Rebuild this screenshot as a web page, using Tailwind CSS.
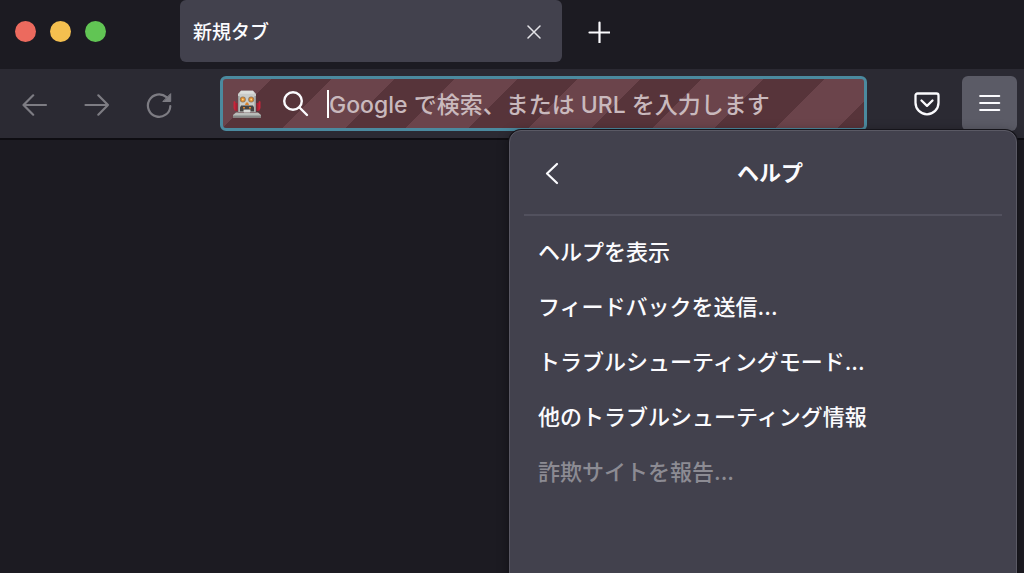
<!DOCTYPE html>
<html lang="ja">
<head>
<meta charset="utf-8">
<meta name="viewport" content="width=device-width, initial-scale=1">
<title>新規タブ</title>
<script src="https://cdn.jsdelivr.net/npm/@tailwindcss/browser@4"></script>
</head>
<body class="relative flex h-screen flex-col overflow-hidden bg-[#1c1b22] font-['Inter','Noto_Sans_CJK_JP',sans-serif] text-[#fbfbfe]">

  <!-- Tab strip -->
  <header class="flex h-[69px] shrink-0 items-start">
    <div class="flex w-[180px] shrink-0 gap-[14px] pt-[21px] pl-[15px]">
      <button aria-label="閉じる" class="size-[21px] rounded-full bg-[#ec6a5e]"></button>
      <button aria-label="最小化" class="size-[21px] rounded-full bg-[#f4bf4f]"></button>
      <button aria-label="最大化" class="size-[21px] rounded-full bg-[#61c554]"></button>
    </div>
    <div class="flex h-[62px] w-[382px] items-center justify-between rounded-md bg-[#42414d] pt-1 pr-5 pl-[13px]">
      <span class="text-[19px] leading-7 font-medium">新規タブ</span>
      <button aria-label="タブを閉じる" class="flex size-4">
        <svg viewBox="0 0 16 16" class="size-4" fill="none" stroke="#e4e4e8" stroke-width="1.500" stroke-linecap="round"><path d="M2 1 14 13M14 1 2 13"/></svg>
      </button>
    </div>
    <button aria-label="新しいタブ" class="ml-[26px] flex pt-[21px]">
      <svg viewBox="0 0 22 22" class="size-[22px]" fill="none" stroke="#fbfbfe" stroke-width="2.200" stroke-linecap="round"><path d="M11.500 1.500v20M1.500 11.500h20"/></svg>
    </button>
  </header>

  <!-- Navigation toolbar -->
  <nav class="flex h-[71px] shrink-0 items-start border-b-2 border-[#0e0d12] bg-[#2b2a33] pt-[7px] pr-[7px]">
    <div class="flex w-[220px] shrink-0 items-center gap-9 pt-4 pl-[22px]">
      <button aria-label="戻る" class="flex" disabled>
        <svg viewBox="0 0 26 26" class="size-[26px]" fill="none" stroke="#7d7c83" stroke-width="2.200" stroke-linecap="round" stroke-linejoin="round"><path d="M24 13H1.500M11.200 3.300 1.500 13l9.700 9.700"/></svg>
      </button>
      <button aria-label="進む" class="flex" disabled>
        <svg viewBox="0 0 26 26" class="size-[26px]" fill="none" stroke="#7d7c83" stroke-width="2.200" stroke-linecap="round" stroke-linejoin="round"><path d="M1.500 13H24M14.300 3.300 24 13l-9.700 9.700"/></svg>
      </button>
      <button aria-label="再読み込み" class="flex" disabled>
        <svg viewBox="0 0 26 26" class="size-[26px]" fill="none" stroke="#7d7c83" stroke-width="2.200" stroke-linecap="round"><path d="M24.300 14.200A11.200 11.200 0 1 1 20.500 5.200"/><path d="M24.700 2v7.500h-7.500z" fill="#7d7c83" stroke-width="1" stroke-linejoin="round"/></svg>
      </button>
    </div>

    <div class="relative flex h-[55px] min-w-0 flex-1 items-center rounded-md border-[3px] border-[#4b8a9f] bg-[repeating-linear-gradient(135deg,#6b444b_0px,#6b444b_34px,#57343a_34px,#57343a_77px,#6b444b_77px,#6b444b_87px)] pl-2.5">
      <svg viewBox="0 0 28 28" class="size-7 shrink-0" aria-hidden="true">
        <path d="M.500 11.500 2 11l1 3v6l-1 1-1.500-3zM27.500 11.500 26 11l-1 3v6l1 1 1.500-3z" fill="#c9253a"/>
        <path d="M2.500 13h2v8h-2zM23.500 13h2v8h-2z" fill="#a32133"/>
        <path d="M8 .800h12l3 3V22H5V3.800z" fill="#c9cbc9"/>
        <path d="M8 .800h12l1.500 3h-15z" fill="#dcdedb"/>
        <path d="M5 6h1.500v16H5zM21.500 6H23v16h-1.500z" fill="#969a99"/>
        <circle cx="9.800" cy="9.500" r="3" fill="#8d7864"/><circle cx="18.200" cy="9.500" r="3" fill="#8d7864"/>
        <circle cx="9.800" cy="9.500" r="2.200" fill="#e08a28"/><circle cx="18.200" cy="9.500" r="2.200" fill="#e08a28"/>
        <circle cx="9.800" cy="9.500" r=".9" fill="#f6d38a"/><circle cx="18.200" cy="9.500" r=".9" fill="#f6d38a"/>
        <path d="M13 12.500h2l1 2.500h-4z" fill="#d9822b"/>
        <path d="M8 15.500h12l1 2v4h-3.500v-2h-7v2H7v-4z" fill="#454242"/>
        <path d="M10 17h2v1.500h-2zM16 17h2v1.500h-2z" fill="#d9822b"/>
        <path d="M11 20h6v2.500h-6z" fill="#d8dad7"/>
        <path d="M3 22.500h22l3 2.500v2.500H0V25z" fill="#b9bcb9"/>
        <path d="M0 25.500h28v2H0z" fill="#848887"/>
      </svg>
      <svg viewBox="0 0 26 26" class="ml-[22px] size-[26px] shrink-0" fill="none" stroke="#fbfbfe" stroke-width="2.400" stroke-linecap="round" aria-hidden="true"><circle cx="10" cy="10" r="8.800"/><path d="M16.500 16.500 24 24"/></svg>
      <span class="ml-[18px] h-7 w-0.5 shrink-0 bg-white" aria-hidden="true"></span>
      <input type="text" aria-label="検索またはアドレスを入力" placeholder="Google で検索、または URL を入力します" class="h-10 min-w-0 flex-1 bg-transparent pt-0.5 text-[23px] font-medium outline-none placeholder:text-[#c9b9bd]">
    </div>

    <button aria-label="Pocket に保存" class="mt-4 ml-[47px] flex">
      <svg viewBox="0 0 26 24" class="h-6 w-[26px]" fill="none" stroke="#fbfbfe" stroke-width="2.300" stroke-linecap="round" stroke-linejoin="round"><path d="M3.500 1.500h19a2 2 0 0 1 2 2v7.300a11.500 11.500 0 0 1-23 0V3.500a2 2 0 0 1 2-2z"/><path d="m7.500 8.500 5.500 5.300 5.500-5.300"/></svg>
    </button>
    <button aria-label="メニュー" class="ml-[22px] flex h-[55px] w-[55px] justify-center rounded-md bg-[#5b5b66] pt-[17px]">
      <svg viewBox="0 0 22 20" class="h-5 w-[22px]" fill="none" stroke="#fbfbfe" stroke-width="2.200" stroke-linecap="round"><path d="M1.200 3h19M1.200 10h19M1.200 17h19"/></svg>
    </button>
  </nav>

  <main class="flex-1"></main>

  <!-- Help panel, hanging from the menu button -->
  <section aria-labelledby="panel-title" class="absolute top-[130px] right-[7px] -bottom-4 w-[508px] rounded-xl border border-[#5a5964] bg-[#42414d] px-3.5 shadow-[0_0_0_1px_#15141a,0_2px_12px_rgba(0,0,0,0.4)]">
    <header class="grid h-[85px] grid-cols-[56px_1fr_42px] items-center border-b-2 border-[#52515e]">
      <button aria-label="戻る" class="flex justify-center">
        <svg viewBox="0 0 24 24" class="size-6" fill="none" stroke="#fbfbfe" stroke-width="2.200" stroke-linecap="round" stroke-linejoin="round"><path d="M17 3 7 12.500 17 22"/></svg>
      </button>
      <h1 id="panel-title" class="text-center text-[22px] leading-8 font-bold">ヘルプ</h1>
    </header>
    <ul class="pt-[9px] text-[22px] font-medium">
      <li><button class="flex h-[55px] w-full items-center px-3.5 text-left">ヘルプを表示</button></li>
      <li><button class="flex h-[55px] w-full items-center px-3.5 text-left">フィードバックを送信...</button></li>
      <li><button class="flex h-[55px] w-full items-center px-3.5 text-left">トラブルシューティングモード...</button></li>
      <li><button class="flex h-[55px] w-full items-center px-3.5 text-left">他のトラブルシューティング情報</button></li>
      <li><button disabled class="flex h-[55px] w-full items-center px-3.5 text-left text-[#8c8b93]">詐欺サイトを報告...</button></li>
    </ul>
  </section>
</body>
</html>
